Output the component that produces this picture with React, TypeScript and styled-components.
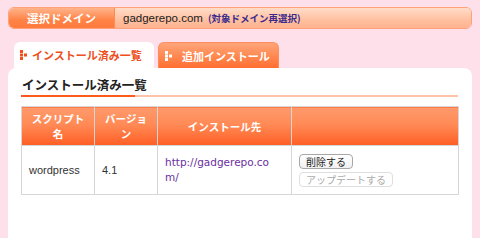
import React from "react";
import styled, { createGlobalStyle } from "styled-components";

const GlobalStyle = createGlobalStyle`
	html, body {
		margin: 0;
		padding: 0;
		background: #fde0ea;
	}
	body {
		font-family: "Liberation Sans", "Noto Sans CJK JP", sans-serif;
	}
`;

const Page = styled.div`
	width: 480px;
	height: 238px;
	padding: 7px 8px 0;
	box-sizing: border-box;
	overflow: hidden;
`;

const DomainBar = styled.div`
	display: flex;
	height: 22px;
	border: 1px solid #ffa27c;
	border-radius: 6px;
	overflow: hidden;
	box-sizing: border-box;
`;

const DomainLabel = styled.div`
	width: 105px;
	display: flex;
	align-items: center;
	justify-content: center;
	background: linear-gradient(#ffb38a, #ff8346 60%, #ff7a3c);
	color: #fff;
	font-size: 11.5px;
	font-weight: bold;
	font-family: "Noto Sans CJK JP", sans-serif;
	border-right: 1px solid #ff8a55;
`;

const DomainValue = styled.div`
	flex: 1;
	display: flex;
	align-items: center;
	padding-left: 8px;
	background: linear-gradient(#ffdcc8, #ffc0a0 60%, #ffb28e);
	gap: 5px;
`;

const DomainName = styled.span`
	font-size: 11.5px;
	color: #222;
`;

const Reselect = styled.span`
	font-size: 9.5px;
	font-weight: bold;
	color: #3b2a8c;
	font-family: "Noto Sans CJK JP", sans-serif;
`;

const Tabs = styled.div`
	display: flex;
	gap: 4px;
	margin-top: 13px;
	padding-left: 6px;
`;

const Tab = styled.div<{ active?: boolean }>`
	width: ${({ active }) => (active ? "140px" : "121px")};
	height: 26px;
	box-sizing: border-box;
	border-radius: 6px 6px 0 0;
	display: flex;
	align-items: center;
	gap: ${({ active }) => (active ? "4px" : "9px")};
	padding-left: 6px;
	font-size: 11px;
	font-weight: bold;
	font-family: "Noto Sans CJK JP", sans-serif;
	color: ${({ active }) => (active ? "#ee4f1c" : "#fff")};
	background: ${({ active }) =>
		active ? "#fff" : "linear-gradient(#ffa57a, #ff8a52 50%, #ff6e32)"};
	border: ${({ active }) => (active ? "none" : "1px solid #ff8c5c")};
	border-bottom: none;
`;

const Panel = styled.div`
	background: #fff;
	border-radius: 8px 8px 0 0;
	padding: 8px 13px 0;
	height: 180px;
	box-sizing: border-box;
`;

const Heading = styled.h2`
	margin: 0;
	font-size: 12.5px;
	line-height: 18px;
	font-weight: bold;
	color: #222;
	font-family: "Noto Sans CJK JP", sans-serif;
	padding-left: 1px;
`;

const Rule = styled.div`
	height: 2px;
	margin-top: 1px;
	background: linear-gradient(to right, #ff5a1e 114px, #ffc3aa 114px);
	width: 437px;
`;

const Table = styled.table`
	margin-top: 9px;
	width: 437px;
	border-collapse: collapse;
	border: 1px solid #cfcfcf;
	table-layout: fixed;
`;

const Th = styled.th`
	background: linear-gradient(#ff9a6c, #ff8a56 45%, #ff5e24);
	color: #fff;
	font-size: 10.5px;
	font-weight: bold;
	font-family: "Noto Sans CJK JP", sans-serif;
	line-height: 15px;
	border: 1px solid #d6d6d6;
	height: 39px;
	padding: 0 8px;
	box-sizing: border-box;
	text-align: center;
`;

const Td = styled.td`
	font-size: 11px;
	color: #333;
	border: 1px solid #d6d6d6;
	height: 48px;
	padding: 0 7px;
	vertical-align: middle;
	line-height: 15px;
`;

const Link = styled.a`
	display: block;
	width: 110px;
	word-break: break-all;
	font-family: "DejaVu Sans", sans-serif;
	font-size: 10.5px;
	color: #6a2f9e;
	text-decoration: none;
`;

const Actions = styled.div`
	display: flex;
	flex-direction: column;
	align-items: flex-start;
	gap: 3px;
`;

const Button = styled.button<{ disabled?: boolean }>`
	font-family: "Noto Sans CJK JP", sans-serif;
	font-size: 10px;
	line-height: 13px;
	padding: 0 6px;
	height: 15px;
	border-radius: 4px;
	background: ${({ disabled }) =>
		disabled ? "#fff" : "linear-gradient(#fff, #f1f1f1)"};
	border: 1px solid ${({ disabled }) => (disabled ? "#dedede" : "#a8a8a8")};
	color: ${({ disabled }) => (disabled ? "#aaa" : "#222")};
`;

const TabIcon: React.FC<{ color: string }> = ({ color }) => (
	<svg width="8" height="10" viewBox="0 0 8 10">
		<rect x="0" y="0" width="3" height="3" fill={color} />
		<rect x="0" y="3.5" width="3" height="3" fill={color} />
		<rect x="4" y="3.5" width="3" height="3" fill={color} />
		<rect x="0" y="7" width="3" height="3" fill={color} />
	</svg>
);

const App: React.FC = () => {
	return (
		<>
			<GlobalStyle />
			<Page>
				<DomainBar>
					<DomainLabel>選択ドメイン</DomainLabel>
					<DomainValue>
						<DomainName>gadgerepo.com</DomainName>
						<Reselect>(対象ドメイン再選択)</Reselect>
					</DomainValue>
				</DomainBar>
				<Tabs>
					<Tab active>
						<TabIcon color="#ee4f1c" />
						インストール済み一覧
					</Tab>
					<Tab>
						<TabIcon color="#fff" />
						追加インストール
					</Tab>
				</Tabs>
				<Panel>
					<Heading>インストール済み一覧</Heading>
					<Rule />
					<Table>
						<colgroup>
							<col style={{ width: 73 }} />
							<col style={{ width: 63 }} />
							<col style={{ width: 134 }} />
							<col style={{ width: 167 }} />
						</colgroup>
						<thead>
							<tr>
								<Th>スクリプト名</Th>
								<Th>バージョン</Th>
								<Th>インストール先</Th>
								<Th></Th>
							</tr>
						</thead>
						<tbody>
							<tr>
								<Td>wordpress</Td>
								<Td>4.1</Td>
								<Td>
									<Link href="#">http://gadgerepo.com/</Link>
								</Td>
								<Td>
									<Actions>
										<Button>削除する</Button>
										<Button disabled>アップデートする</Button>
									</Actions>
								</Td>
							</tr>
						</tbody>
					</Table>
				</Panel>
			</Page>
		</>
	);
};

export default App;
